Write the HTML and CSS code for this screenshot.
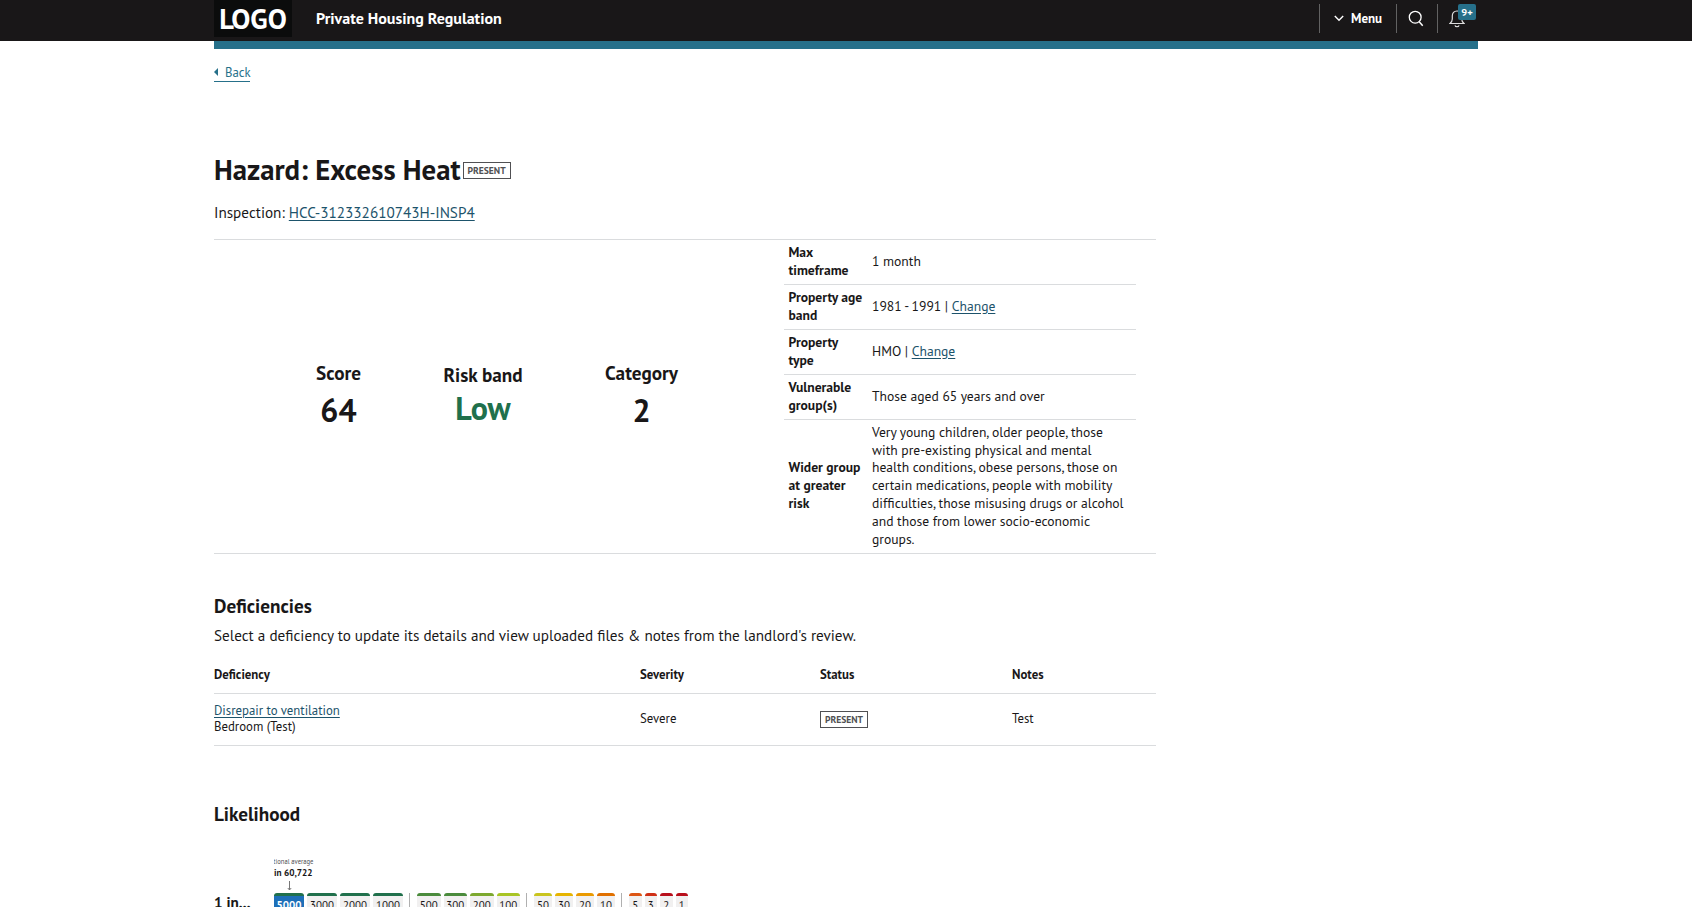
FILE: index.html
```html
<!DOCTYPE html>
<html lang="en">
<head>
    <meta charset="UTF-8">
    <meta name="viewport" content="width=device-width, initial-scale=1.0">
    <title>Hazard: Excess Heat</title>
    <link rel="stylesheet" href="styles.css">
</head>
<body>
    <header class="site-header">
        <div class="width-container header-inner">
            <div class="logo">LOGO</div>
            <div class="service-name">Private Housing Regulation</div>
            <nav class="header-nav">
                <a class="nav-item nav-menu" href="#">
                    <svg width="10" height="7" viewBox="0 0 10 7"><path d="M0.8 1l4.2 4.3L9.2 1" fill="none" stroke="#fff" stroke-width="1.4"/></svg>
                    <span>Menu</span>
                </a>
                <a class="nav-item nav-search" href="#">
                    <svg width="16" height="17" viewBox="0 0 16 17"><circle cx="7.2" cy="7.2" r="5.9" fill="none" stroke="#fff" stroke-width="1.3"/><path d="M11.2 11.7l3.5 4" stroke="#fff" stroke-width="1.5"/></svg>
                </a>
                <a class="nav-item nav-bell" href="#">
                    <svg width="16" height="18" viewBox="0 0 16 18" fill="none" stroke="#ddd" stroke-width="1.2"><path d="M8 1C5 1 3.300 3 3.300 5.800v3.200c0 2-.8 3.200-2.300 4.500h14c-1.500-1.300-2.300-2.500-2.300-4.500V5.800C12.700 3 11 1 8 1z"/><path d="M6 15.300c.3 1.800 3.700 1.800 4 0"/></svg>
                    <span class="count">9+</span>
                </a>
            </nav>
        </div>
    </header>

    <div class="width-container">
        <div class="header-bar"></div>
        <a class="back-link" href="#">Back</a>

        <main class="content">
            <div class="title-row">
                <h1>Hazard: Excess Heat</h1>
                <span class="tag">PRESENT</span>
            </div>
            <p class="inspection">Inspection: <a href="#">HCC-312332610743H-INSP4</a></p>

            <section class="summary">
                <div class="scores">
                    <div class="score score-first">
                        <h3>Score</h3>
                        <p>64</p>
                    </div>
                    <div class="score score-band">
                        <h3>Risk band</h3>
                        <p>Low</p>
                    </div>
                    <div class="score score-category">
                        <h3>Category</h3>
                        <p>2</p>
                    </div>
                </div>
                <table class="details">
                    <tr>
                        <th>Max<br>timeframe</th>
                        <td>1 month</td>
                    </tr>
                    <tr>
                        <th>Property age<br>band</th>
                        <td>1981 - 1991 | <a href="#">Change</a></td>
                    </tr>
                    <tr>
                        <th>Property<br>type</th>
                        <td>HMO | <a href="#">Change</a></td>
                    </tr>
                    <tr>
                        <th>Vulnerable<br>group(s)</th>
                        <td>Those aged 65 years and over</td>
                    </tr>
                    <tr>
                        <th>Wider group<br>at greater<br>risk</th>
                        <td>Very young children, older people, those<br>with pre-existing physical and mental<br>health conditions, obese persons, those on<br>certain medications, people with mobility<br>difficulties, those misusing drugs or alcohol<br>and those from lower socio-economic<br>groups.</td>
                    </tr>
                </table>
            </section>

            <section class="deficiencies">
                <h2>Deficiencies</h2>
                <p class="intro">Select a deficiency to update its details and view uploaded files &amp; notes from the landlord's review.</p>
                <table class="deficiency-table">
                    <thead>
                        <tr>
                            <th class="col-name">Deficiency</th>
                            <th class="col-severity">Severity</th>
                            <th class="col-status">Status</th>
                            <th>Notes</th>
                        </tr>
                    </thead>
                    <tbody>
                        <tr>
                            <td><a href="#">Disrepair to ventilation</a><br>Bedroom (Test)</td>
                            <td>Severe</td>
                            <td><span class="tag">PRESENT</span></td>
                            <td>Test</td>
                        </tr>
                    </tbody>
                </table>
            </section>

            <section class="likelihood">
                <h2>Likelihood</h2>
                <div class="scale">
                    <div class="scale-label">1 in...</div>
                    <div class="scale-body">
                        <div class="average">
                            <span class="average-title">National average</span>
                            <span class="average-value">1 in 60,722</span>
                            <svg width="7" height="10" viewBox="0 0 7 10"><path d="M3.500 0v9M1.800 7l1.700 2 1.700-2" fill="none" stroke="#777" stroke-width="1"/></svg>
                        </div>
                        <div class="bands">
                            <div class="band-group">
                                <span class="band w4 green selected">5000</span>
                                <span class="band w4 green">3000</span>
                                <span class="band w4 green">2000</span>
                                <span class="band w4 green">1000</span>
                            </div>
                            <div class="band-group">
                                <span class="band w3 leaf">500</span>
                                <span class="band w3 leaf">300</span>
                                <span class="band w3 lime-dark">200</span>
                                <span class="band w3 lime">100</span>
                            </div>
                            <div class="band-group">
                                <span class="band w2 olive">50</span>
                                <span class="band w2 yellow">30</span>
                                <span class="band w2 amber">20</span>
                                <span class="band w2 orange">10</span>
                            </div>
                            <div class="band-group">
                                <span class="band w1 rust">5</span>
                                <span class="band w1 red">3</span>
                                <span class="band w1 crimson">2</span>
                                <span class="band w1 crimson">1</span>
                            </div>
                        </div>
                    </div>
                </div>
            </section>
        </main>
    </div>
</body>
</html>
```
FILE: styles.css
```css
* {
    box-sizing: border-box;
}
body {
    margin: 0;
    height: 907px;
    overflow: hidden;
    background-color: #fff;
    color: #191718;
    font-family: "PT Sans", "Open Sans", "Noto Sans", sans-serif;
    font-stretch: 87.5%;
    font-size: 15.2px;
}
h1, h2, h3, p {
    margin: 0;
}
h1, h2, h3 {
    font-weight: 600;
}
table {
    border-collapse: collapse;
}
th {
    text-align: left;
    font-weight: 700;
}
a {
    color: #1d536b;
    text-underline-offset: 2px;
}
.width-container {
    width: 1264px;
    margin: 0 auto;
}

/* header */
.site-header {
    height: 41px;
    background-color: #191718;
    color: #fff;
}
.header-inner {
    display: flex;
    height: 41px;
}
.logo {
    width: 78px;
    height: 37px;
    background-color: #0b0c0c;
    font-size: 28.5px;
    line-height: 38px;
    text-align: center;
    font-weight: 600;
}
.service-name {
    margin-left: 24px;
    font-size: 16px;
    line-height: 36px;
    font-weight: 700;
}
.header-nav {
    display: flex;
    margin: 4px 0 0 auto;
    height: 29px;
}
.nav-item {
    display: flex;
    align-items: center;
    border-left: 1px solid #626262;
    color: #fff;
    text-decoration: none;
}
.nav-menu {
    width: 77px;
    padding-left: 14px;
    gap: 7px;
    font-size: 13px;
    font-weight: 700;
}
.nav-search {
    width: 41px;
    padding-left: 11px;
}
.nav-bell {
    position: relative;
    width: 41px;
    padding-left: 11px;
}
.count {
    position: absolute;
    left: 20px;
    top: 0;
    width: 18px;
    height: 16px;
    border-radius: 2px;
    background-color: #26708a;
    font-size: 10.4px;
    line-height: 16px;
    font-weight: 700;
    text-align: center;
}
.header-bar {
    height: 8px;
    background-color: #26708a;
}
.back-link {
    display: flex;
    align-items: center;
    width: 36px;
    height: 19px;
    margin-top: 14px;
    border-bottom: 1px solid #26708a;
    color: #26708a;
    font-size: 12.8px;
    text-decoration: none;
}
.back-link::before {
    content: "";
    margin-right: 7px;
    border: 4px solid transparent;
    border-left-width: 0;
    border-right-color: #26708a;
}

/* page title */
.content {
    width: 942px;
}
.title-row {
    display: flex;
    align-items: center;
    gap: 2px;
    height: 40px;
    margin-top: 68px;
}
h1 {
    font-size: 28.8px;
    line-height: 40px;
}
.tag {
    display: inline-block;
    width: 48px;
    height: 17px;
    border: 1px solid #505053;
    color: #505053;
    font-size: 9.6px;
    line-height: 15px;
    font-weight: 600;
    text-align: center;
    vertical-align: middle;
}
.inspection {
    height: 24px;
    margin: 11px 0 14px;
    line-height: 24px;
}

/* summary */
.summary {
    display: flex;
    height: 315px;
    border-top: 1px solid #dadcde;
    border-bottom: 1px solid #dadcde;
}
.scores {
    display: flex;
    width: 570px;
    padding-top: 119px;
}
.score {
    text-align: center;
    white-space: nowrap;
}
.score h3 {
    font-size: 19.2px;
    line-height: 28px;
}
.score p {
    font-size: 32px;
    line-height: 46px;
    font-weight: 600;
}
.score-first {
    width: 249px;
}
.score-band {
    width: 40px;
    display: flex;
    flex-direction: column;
    align-items: center;
    padding-top: 2px;
}
.score-band p {
    line-height: 38px;
    color: #20704c;
}
.score-category {
    width: 277px;
}
.details {
    width: 352px;
    font-size: 13.6px;
    line-height: 17.85px;
}
.details tr + tr {
    border-top: 1px solid #dadcde;
}
.details th,
.details td {
    padding: 4px 0 4px 5px;
    white-space: nowrap;
}
.details th {
    width: 83px;
    padding-left: 4.5px;
}

/* deficiencies */
.deficiencies {
    margin-top: 37px;
}
h2 {
    font-size: 19.2px;
    line-height: 30px;
}
.intro {
    line-height: 30px;
}
.deficiency-table {
    width: 942px;
    margin-top: 3px;
    font-size: 12.8px;
    line-height: 16px;
}
.deficiency-table th {
    height: 39px;
    padding: 3px 0 0;
    border-bottom: 1px solid #dadcde;
}
.deficiency-table td {
    height: 52px;
    padding: 0;
    border-bottom: 1px solid #dadcde;
}
.col-name {
    width: 426px;
}
.col-severity {
    width: 180px;
}
.col-status {
    width: 192px;
}

/* likelihood scale */
.likelihood {
    margin-top: 53px;
}
.scale {
    display: flex;
    margin-top: 28px;
}
.scale-label {
    width: 60px;
    padding-top: 34px;
    font-size: 15.2px;
    line-height: 24px;
    font-weight: 600;
}
.scale-body {
    overflow: hidden;
}
.average {
    display: flex;
    flex-direction: column;
    align-items: center;
    width: 31px;
    height: 36px;
    white-space: nowrap;
}
.average-title {
    color: #505053;
    font-size: 6.6px;
    line-height: 9px;
}
.average-value {
    font-size: 9.3px;
    line-height: 14px;
    font-weight: 600;
}
.average svg {
    margin-top: 1px;
}
.bands {
    display: flex;
}
.band-group {
    display: flex;
    gap: 3px;
}
.band-group + .band-group {
    margin-left: 6px;
    padding-left: 7px;
    border-left: 1px solid #b0b0b0;
}
.band {
    height: 26px;
    border-top: 3px solid;
    border-radius: 3px;
    background-color: #f1f0f0;
    font-size: 11px;
    line-height: 19px;
    text-align: center;
}
.w4 { width: 30px; }
.w3 { width: 23.5px; }
.w2 { width: 18px; }
.w1 { width: 12.5px; }
.green { border-color: #20704c; }
.leaf { border-color: #4a8b3c; }
.lime-dark { border-color: #7ca82e; }
.lime { border-color: #a8c424; }
.olive { border-color: #c9c41e; }
.yellow { border-color: #e6b400; }
.amber { border-color: #ea9a00; }
.orange { border-color: #e07000; }
.rust { border-color: #dc5514; }
.red { border-color: #cf3016; }
.crimson { border-color: #b80f1b; }
.selected {
    background-color: #1d6fb8;
    color: #fff;
    font-weight: 600;
}
```
